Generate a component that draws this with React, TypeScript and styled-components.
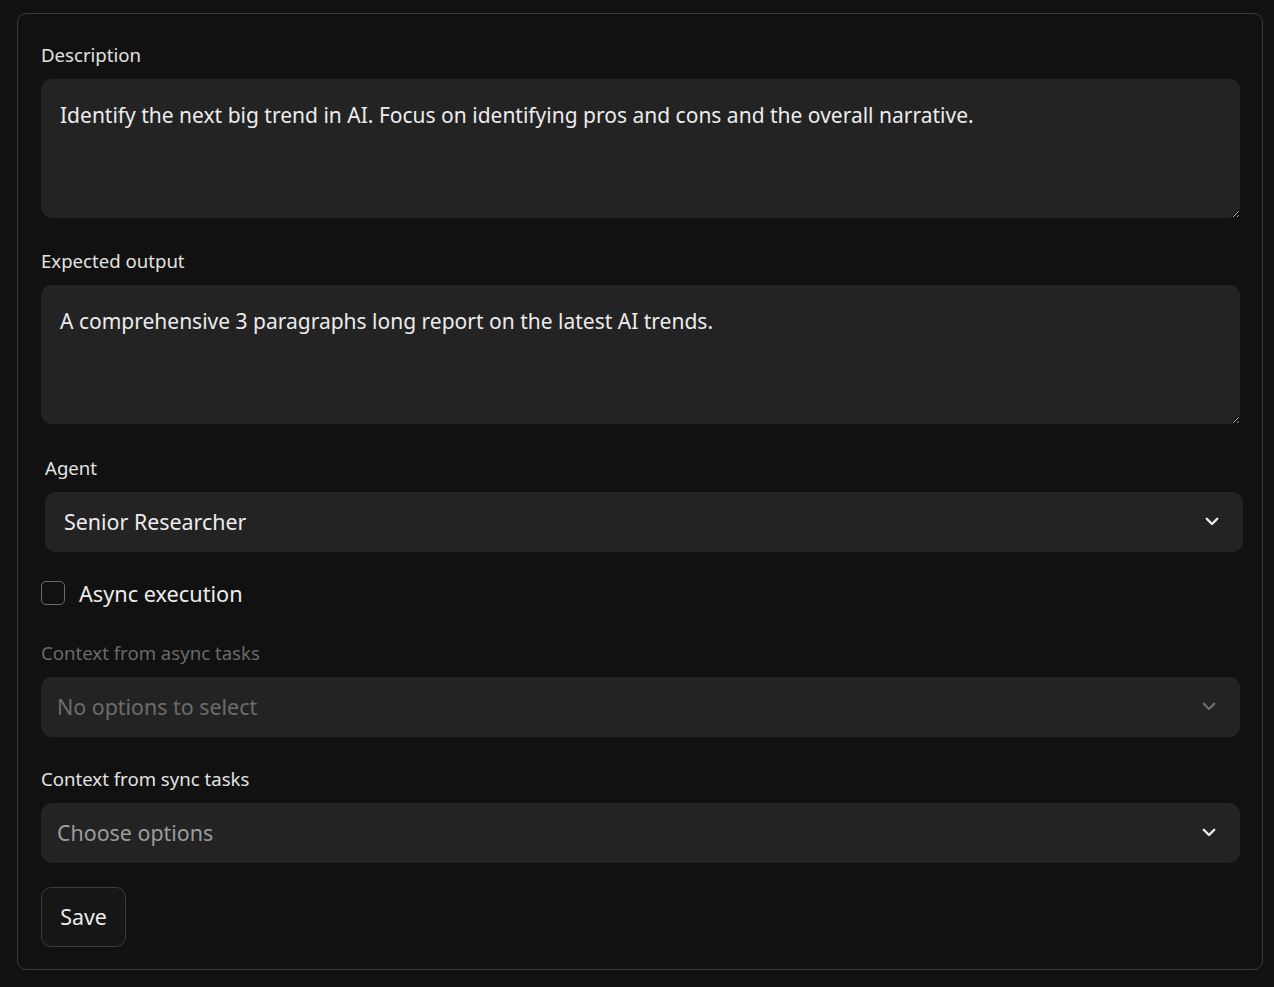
import styled, { createGlobalStyle } from "styled-components";

const GlobalStyle = createGlobalStyle`
  html, body {
    margin: 0;
    background: #111111;
    color-scheme: dark;
  }
  body {
    font-family: "Noto Sans", "Liberation Sans", sans-serif;
    color: #e6e6e6;
  }
`;

const Page = styled.div`
  padding: 13px 11px 17px 17px;
`;

const Card = styled.form`
  border: 1px solid #3a3a3a;
  border-radius: 9px;
  padding: 29px 22px 22px 23px;
  display: flex;
  flex-direction: column;
`;

const Field = styled.div<{ $mt?: number; $inset?: boolean }>`
  margin-top: ${(p) => p.$mt ?? 0}px;
  display: flex;
  flex-direction: column;
  gap: 12px;
  ${(p) => (p.$inset ? "margin-left: 4px; margin-right: -3px;" : "")}
`;

const Label = styled.label<{ $disabled?: boolean }>`
  font-size: 18.6px;
  line-height: 24px;
  color: ${(p) => (p.$disabled ? "#6a6a6a" : "#e2e2e2")};
`;

const TextArea = styled.textarea`
  box-sizing: border-box;
  height: 139px;
  width: 100%;
  background: #232323;
  border: none;
  border-radius: 11px;
  padding: 20px 19px;
  font: inherit;
  font-size: 21px;
  line-height: 32px;
  color: #ececec;
  resize: vertical;
  outline: none;
`;

const SelectBox = styled.div<{ $pad: number; $disabled?: boolean }>`
  box-sizing: border-box;
  height: 60px;
  background: #232323;
  border-radius: 11px;
  padding: 0 22px 2px ${(p) => p.$pad}px;
  display: flex;
  align-items: center;
  justify-content: space-between;
  cursor: ${(p) => (p.$disabled ? "not-allowed" : "pointer")};
`;

const SelectText = styled.span<{ $tone: "value" | "placeholder" | "disabled" }>`
  font-size: 21.4px;
  color: ${(p) =>
    p.$tone === "value" ? "#ececec" : p.$tone === "placeholder" ? "#9c9c9c" : "#6c6c6c"};
`;

const CheckRow = styled.label`
  margin-top: 29px;
  display: flex;
  align-items: center;
  gap: 14px;
  height: 24px;
  font-size: 21.7px;
  color: #ececec;
`;

const Box = styled.span`
  box-sizing: border-box;
  width: 24px;
  height: 24px;
  border: 1px solid #6a6a6a;
  border-radius: 5px;
`;

const SaveButton = styled.button`
  margin-top: 24px;
  align-self: flex-start;
  box-sizing: border-box;
  width: 85px;
  height: 60px;
  padding: 0 0 2px;
  background: #161616;
  border: 1px solid #3c3c3c;
  border-radius: 10px;
  font: inherit;
  font-size: 21.4px;
  color: #ececec;
  cursor: pointer;
`;

const Chevron = ({ color }: { color: string }) => (
  <svg width="18" height="18" viewBox="0 0 24 24" fill="none">
    <path d="M5 9l7 7 7-7" stroke={color} strokeWidth="3.2" strokeLinecap="round" strokeLinejoin="round" />
  </svg>
);

const App = () => (
  <Page>
    <GlobalStyle />
    <Card onSubmit={(e) => e.preventDefault()}>
      <Field>
        <Label>Description</Label>
        <TextArea defaultValue="Identify the next big trend in AI. Focus on identifying pros and cons and the overall narrative." />
      </Field>
      <Field $mt={31}>
        <Label>Expected output</Label>
        <TextArea defaultValue="A comprehensive 3 paragraphs long report on the latest AI trends." />
      </Field>
      <Field $mt={32} $inset>
        <Label>Agent</Label>
        <SelectBox $pad={19}>
          <SelectText $tone="value">Senior Researcher</SelectText>
          <Chevron color="#ececec" />
        </SelectBox>
      </Field>
      <CheckRow>
        <Box />
        Async execution
      </CheckRow>
      <Field $mt={36}>
        <Label $disabled>Context from async tasks</Label>
        <SelectBox $pad={16} $disabled>
          <SelectText $tone="disabled">No options to select</SelectText>
          <Chevron color="#6c6c6c" />
        </SelectBox>
      </Field>
      <Field $mt={30}>
        <Label>Context from sync tasks</Label>
        <SelectBox $pad={16}>
          <SelectText $tone="placeholder">Choose options</SelectText>
          <Chevron color="#ececec" />
        </SelectBox>
      </Field>
      <SaveButton type="submit">Save</SaveButton>
    </Card>
  </Page>
);

export default App;
